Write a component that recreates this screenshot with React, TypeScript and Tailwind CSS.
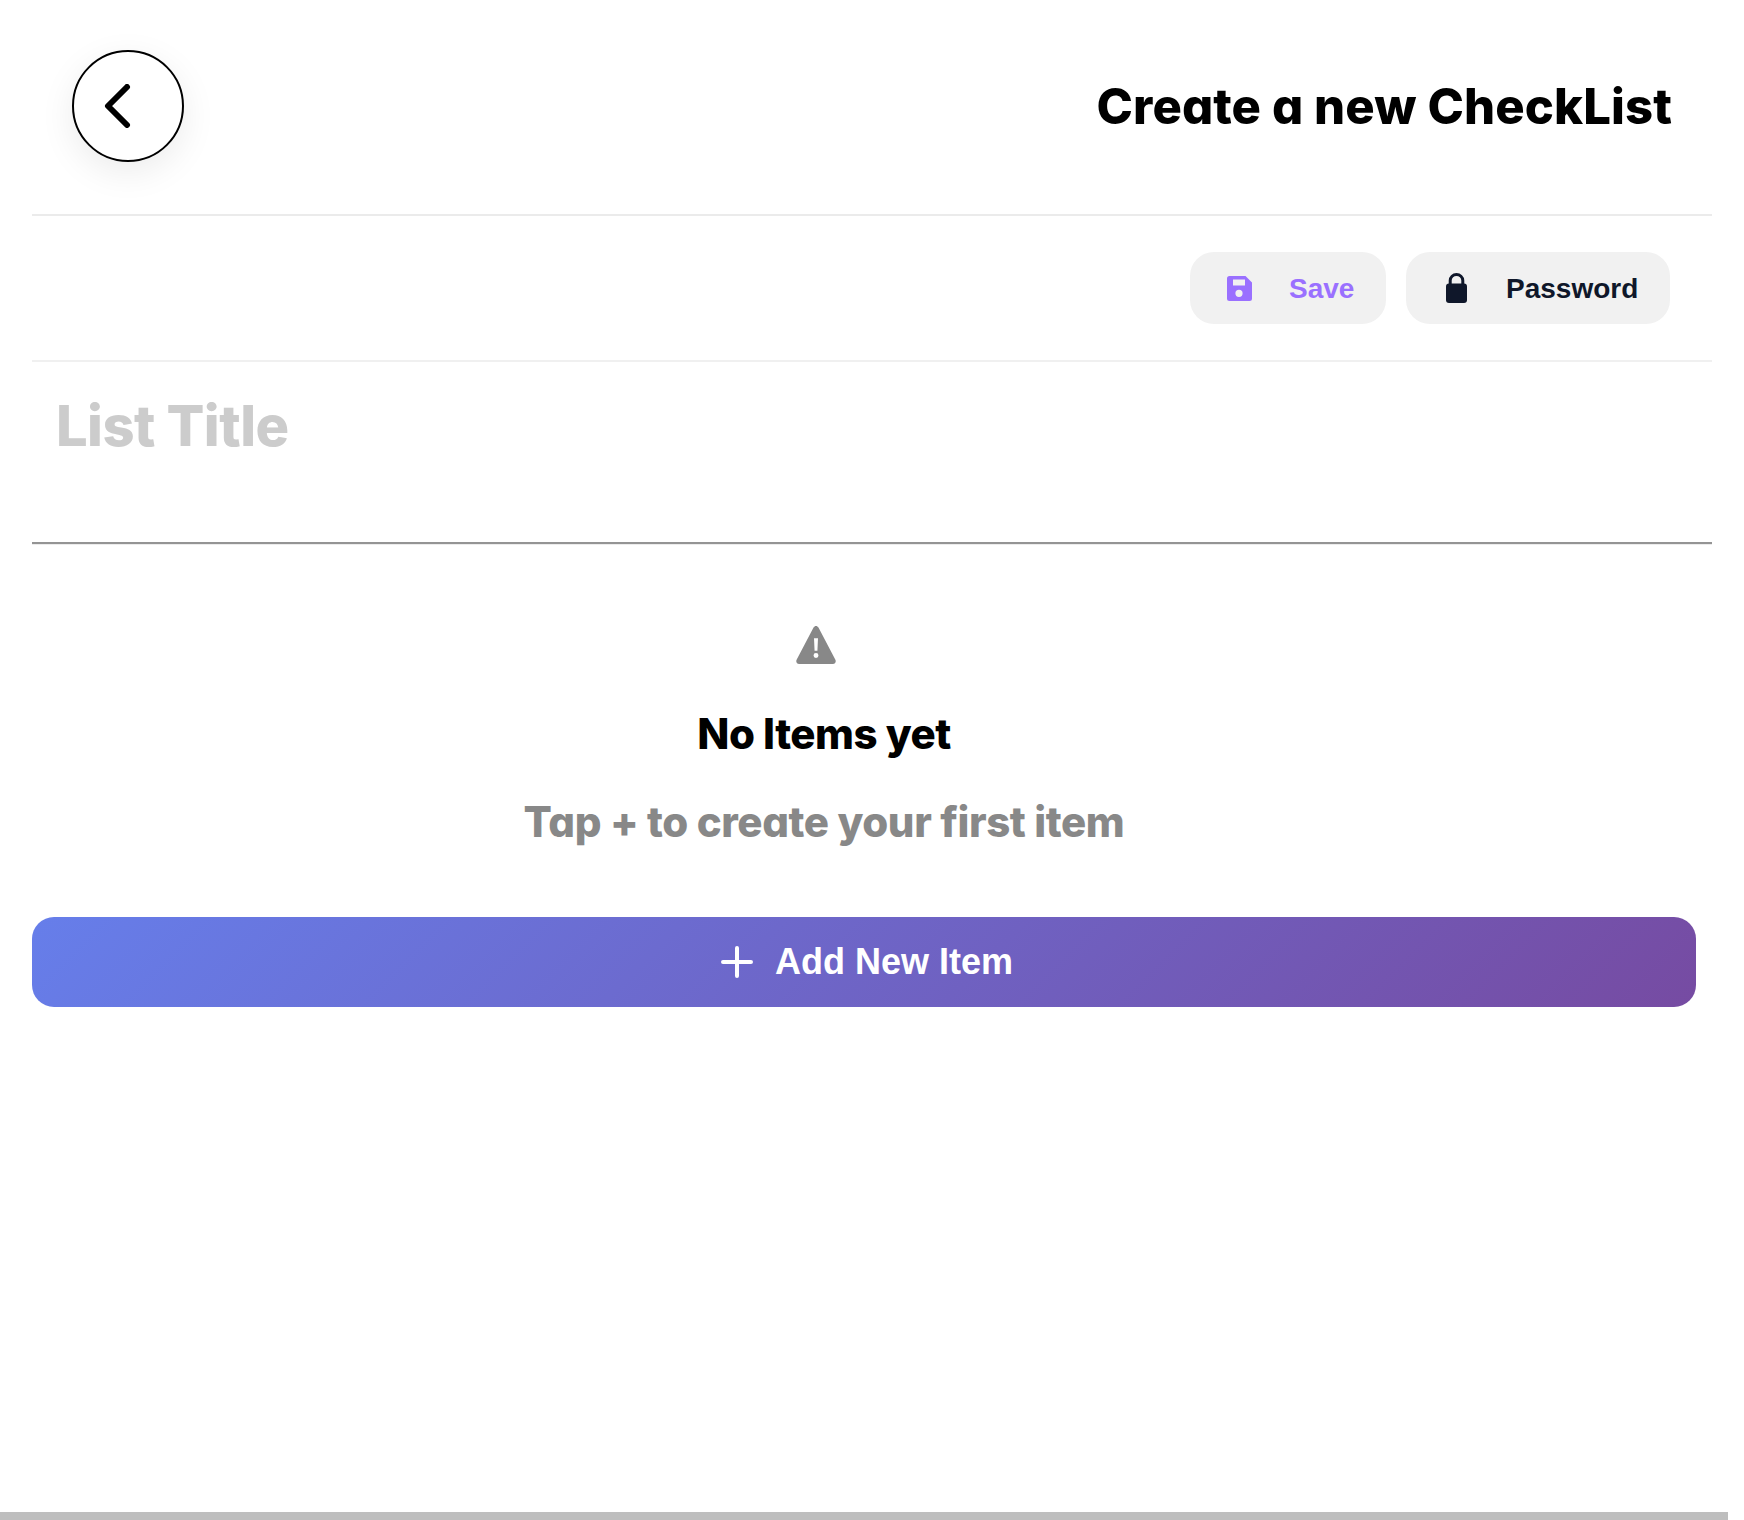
export default function App() {
  const poppins = "font-['Inter',sans-serif] [font-feature-settings:'cv11','ss03']";
  return (
    <div className="w-[1728px] h-[1520px] bg-white flex flex-col font-['Liberation_Sans',sans-serif]">
      <div className="flex-1 flex flex-col">
        <header className="h-[214px] ml-[32px] w-[1680px] flex items-start justify-between pt-[50px] pl-[40px] pr-[40px]">
          <button className="w-[112px] h-[112px] rounded-full border-2 border-black bg-white flex items-center justify-center shadow-[0_10px_35px_rgba(0,0,0,0.08)]">
            <svg width="30" height="44" viewBox="0 0 30 44" fill="none" stroke="black" strokeWidth="6" strokeLinecap="round" strokeLinejoin="round" className="mr-[21px]">
              <path d="M24 3 L5 22 L24 41" />
            </svg>
          </button>
          <h1 className={`${poppins} text-[49px] leading-[72px] font-extrabold text-black tracking-[0.1px] mt-[21px]`}>Create a new CheckList</h1>
        </header>
        <div className="ml-[32px] w-[1680px] h-[2px] bg-[#ebebeb]" />
        <div className="ml-[32px] w-[1680px] h-[144px] flex items-center justify-end gap-[20px] pr-[42px]">
          <button className="w-[196px] h-[72px] rounded-[24px] bg-[#f1f1f1] flex items-center pl-[37px] gap-[37px]">
            <svg width="25" height="25" viewBox="0 0 25 25" fill="#9a70ff">
              <path fillRule="evenodd" d="M2.5 0 H18.5 L25 6.5 V22.5 A2.5 2.5 0 0 1 22.5 25 H2.5 A2.5 2.5 0 0 1 0 22.5 V2.5 A2.5 2.5 0 0 1 2.5 0 Z M6 3.5 V9.5 H18 V3.5 Z M12 13.7 A3.6 3.6 0 1 0 12 20.9 A3.6 3.6 0 1 0 12 13.7 Z" />
            </svg>
            <span className="text-[28px] font-bold text-[#9a70ff] pt-[1px]">Save</span>
          </button>
          <button className="w-[264px] h-[72px] rounded-[24px] bg-[#f1f1f1] flex items-center pl-[40px] gap-[39px]">
            <svg width="21" height="30" viewBox="0 0 21 30">
              <path fill="none" stroke="#0f172a" strokeWidth="3" d="M4.2 13 V7.5 A6.3 6 0 0 1 16.8 7.5 V13" />
              <rect x="0" y="10.5" width="21" height="19.5" rx="3" fill="#0f172a" />
            </svg>
            <span className="text-[28px] font-bold text-[#0f172a] pt-[1px]">Password</span>
          </button>
        </div>
        <div className="ml-[32px] w-[1680px] h-[2px] bg-[#f0f0f0]" />
        <div className={`${poppins} ml-[32px] w-[1680px] h-[182px] border-b-2 border-[#949494] shadow-[0_1px_0_#ececec] pl-[24px] pt-[22px] text-[56px] leading-[84px] font-extrabold text-[#cccccc] tracking-[-0.55px]`}>List Title</div>
        <div className="ml-[32px] w-[1584px] flex flex-col items-center">
          <svg width="40" height="38" viewBox="0 0 42 40" className="mt-[82px] mr-[17px]" fill="#888888">
            <path fillRule="evenodd" d="M21 0 C22 0 23 .6 23.6 1.7 L41.4 35.6 C42.5 37.7 41 40 38.8 40 H3.2 C1 40 -.5 37.7 .6 35.6 L18.4 1.7 C19 .6 20 0 21 0 Z M18.9 13 L19.5 26 H22.5 L23.1 13 Z M21 28.5 A2.6 2.6 0 1 0 21 33.7 A2.6 2.6 0 1 0 21 28.5 Z" />
          </svg>
          <div className={`${poppins} text-[42px] leading-[60px] font-extrabold text-black mt-[40px] tracking-[-0.5px]`}>No Items yet</div>
          <div className={`${poppins} text-[42px] leading-[60px] font-extrabold text-[#888888] mt-[28px] tracking-[-0.4px]`}>Tap + to create your first item</div>
        </div>
        <button className="ml-[32px] mt-[65px] w-[1664px] h-[90px] rounded-[22px] bg-[linear-gradient(135deg,#667eea,#764ba2)] flex items-center justify-center gap-[22px] pl-[6px] text-white">
          <svg width="32" height="32" viewBox="0 0 32 32" fill="none" stroke="white" strokeWidth="4" strokeLinecap="round"><path d="M16 2 V30 M2 16 H30" /></svg>
          <span className="text-[36px] font-bold">Add New Item</span>
        </button>
      </div>
      <div className="h-[8px] bg-[#bebebe]" />
    </div>
  );
}
